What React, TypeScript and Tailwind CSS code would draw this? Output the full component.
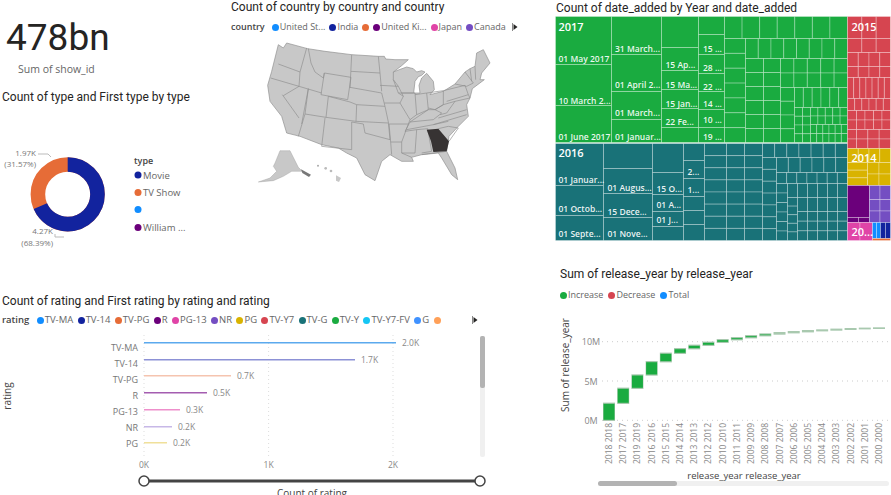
const sans = "font-['Roboto',sans-serif]";
const ui = "font-['Open_Sans',sans-serif]";

type LegendItem = { label: string; color: string };

const countryLegend: LegendItem[] = [
  { label: "United St...", color: "#118DFF" },
  { label: "India", color: "#12239E" },
  { label: "", color: "#E66C37" },
  { label: "United Ki...", color: "#6B007B" },
  { label: "Japan", color: "#E044A7" },
  { label: "Canada", color: "#744EC2" },
];

const ratingLegend: LegendItem[] = [
  { label: "TV-MA", color: "#118DFF" },
  { label: "TV-14", color: "#12239E" },
  { label: "TV-PG", color: "#E66C37" },
  { label: "R", color: "#6B007B" },
  { label: "PG-13", color: "#E044A7" },
  { label: "NR", color: "#744EC2" },
  { label: "PG", color: "#D9B300" },
  { label: "TV-Y7", color: "#D64550" },
  { label: "TV-G", color: "#197278" },
  { label: "TV-Y", color: "#1AAB40" },
  { label: "TV-Y7-FV", color: "#15C6F4" },
  { label: "G", color: "#4092FF" },
  { label: "", color: "#FFA058" },
];

const waterfallLegend: LegendItem[] = [
  { label: "Increase", color: "#1AAB40" },
  { label: "Decrease", color: "#D64550" },
  { label: "Total", color: "#118DFF" },
];

// [x, y, w, h, cols, rows], in page pixels
type Block = [number, number, number, number, number, number];

const greenBlocks: Block[] = [
  [556, 17, 56, 48, 1, 1],
  [556, 65, 56, 41, 1, 1],
  [556, 106, 56, 37, 1, 1],
  [612, 17, 50, 38, 1, 1],
  [612, 55, 50, 37, 1, 1],
  [612, 92, 50, 28, 1, 1],
  [612, 120, 50, 23, 1, 1],
  [662, 17, 37, 31, 1, 1],
  [662, 48, 37, 23, 1, 1],
  [662, 71, 37, 19, 1, 1],
  [662, 90, 37, 19, 1, 1],
  [662, 109, 37, 19, 1, 1],
  [662, 128, 37, 15, 1, 1],
  [699, 17, 26, 18, 1, 1],
  [699, 35, 26, 20, 1, 1],
  [699, 55, 26, 19, 1, 1],
  [699, 74, 26, 18, 1, 1],
  [699, 92, 26, 18, 1, 1],
  [699, 110, 26, 18, 1, 1],
  [699, 128, 26, 15, 1, 1],
  [725, 17, 123, 22, 7, 1],
  [725, 39, 21, 104, 1, 7],
  [746, 39, 102, 20, 8, 1],
  [746, 59, 18, 84, 1, 6],
  [764, 59, 17, 84, 1, 6],
  [781, 59, 67, 29, 5, 2],
  [781, 88, 14, 55, 1, 4],
  [795, 88, 53, 20, 6, 1],
  [795, 108, 16, 35, 2, 4],
  [811, 108, 37, 17, 5, 2],
  [811, 125, 37, 18, 6, 2],
];

const tealBlocks: Block[] = [
  [556, 144, 48, 42, 1, 1],
  [556, 186, 48, 30, 1, 1],
  [556, 216, 48, 25, 1, 1],
  [604, 144, 49, 25, 1, 1],
  [604, 169, 49, 25, 1, 1],
  [604, 194, 49, 24, 1, 1],
  [604, 218, 49, 23, 1, 1],
  [653, 144, 31, 29, 1, 1],
  [653, 173, 31, 22, 1, 1],
  [653, 195, 31, 17, 1, 1],
  [653, 212, 31, 15, 1, 1],
  [653, 227, 31, 14, 1, 1],
  [684, 144, 21, 17, 1, 1],
  [684, 161, 21, 18, 1, 1],
  [684, 179, 21, 18, 1, 1],
  [684, 197, 21, 14, 1, 1],
  [684, 211, 21, 14, 1, 1],
  [684, 225, 21, 16, 1, 1],
  [705, 144, 22, 97, 1, 8],
  [727, 144, 18, 97, 1, 8],
  [745, 144, 18, 97, 1, 8],
  [763, 144, 85, 14, 7, 1],
  [763, 158, 14, 83, 1, 7],
  [777, 158, 71, 15, 6, 1],
  [777, 173, 71, 11, 7, 1],
  [777, 184, 11, 57, 1, 6],
  [788, 184, 60, 14, 6, 1],
  [788, 198, 10, 43, 1, 5],
  [798, 198, 50, 14, 5, 1],
  [798, 212, 50, 29, 5, 3],
];

const otherBlocks: { fill: string; blocks: Block[] }[] = [
  {
    fill: "#D64550",
    blocks: [
      [848, 17, 43, 22, 3, 1],
      [848, 39, 43, 14, 3, 1],
      [848, 53, 43, 14, 4, 1],
      [848, 67, 43, 11, 4, 1],
      [848, 78, 43, 21, 7, 1],
      [848, 99, 43, 12, 6, 1],
      [848, 111, 9, 38, 1, 4],
      [857, 111, 34, 19, 4, 2],
      [857, 130, 34, 19, 3, 2],
    ],
  },
  {
    fill: "#D9B300",
    blocks: [
      [848, 149, 43, 14, 4, 1],
      [848, 163, 20, 23, 1, 3],
      [868, 163, 23, 23, 2, 2],
    ],
  },
  { fill: "#6B007B", blocks: [[848, 186, 22, 32, 1, 1], [848, 218, 22, 5, 2, 1]] },
  { fill: "#744EC2", blocks: [[870, 186, 21, 14, 2, 1], [870, 200, 21, 23, 2, 2]] },
  { fill: "#E044A7", blocks: [[848, 223, 25, 18, 2, 1]] },
  { fill: "#118DFF", blocks: [[873, 223, 8, 16, 2, 1]] },
  { fill: "#12239E", blocks: [[881, 223, 10, 16, 2, 1]] },
  { fill: "#E66C37", blocks: [[873, 239, 18, 2, 1, 1]] },
];

const treeLabels: [number, number, string][] = [
  [559, 62, "01 May 2017"],
  [559, 104, "10 March 2..."],
  [559, 140, "01 June 2017"],
  [615.5, 52, "31 March..."],
  [615.5, 88.5, "01 April 2..."],
  [615.5, 116.5, "01 March..."],
  [615.5, 140, "01 Januar..."],
  [666, 68.5, "15 Ap..."],
  [666, 88.5, "15 Ma..."],
  [666, 107.5, "15 Jan..."],
  [666, 125.5, "22 Fe..."],
  [703.5, 52.5, "15 ..."],
  [703.5, 71.5, "28 ..."],
  [703.5, 90.5, "22 ..."],
  [703.5, 107.5, "14 ..."],
  [703.5, 123.5, "10 ..."],
  [703.5, 140, "19 ..."],
  [559, 183.5, "01 Januar..."],
  [559, 212.5, "01 Octob..."],
  [559, 237.5, "01 Septe..."],
  [608, 191.5, "01 Augus..."],
  [608, 215.5, "15 Dece..."],
  [608, 237.5, "01 Nove..."],
  [657, 192.5, "15 O..."],
  [657, 208.5, "01 A..."],
  [657, 223.5, "01 J..."],
  [688, 175.5, "2..."],
  [688, 193.5, "1..."],
];

const treeHeads: [number, number, string][] = [
  [559, 31, "2017"],
  [559, 157, "2016"],
  [852, 31, "2015"],
  [852, 162, "2014"],
  [852, 236, "20..."],
];

const ratingBars = [
  { label: "TV-MA", end: 396, value: "2.0K", color: "#5BA9EE" },
  { label: "TV-14", end: 355, value: "1.7K", color: "#8C91D6" },
  { label: "TV-PG", end: 231, value: "0.7K", color: "#F5C4AF" },
  { label: "R", end: 207, value: "0.5K", color: "#A45DB0" },
  { label: "PG-13", end: 180, value: "0.3K", color: "#EE8FCB" },
  { label: "NR", end: 172, value: "0.2K", color: "#C7B8E7" },
  { label: "PG", end: 167, value: "0.2K", color: "#F0E09A" },
];

const years = [2018, 2017, 2019, 2016, 2015, 2014, 2013, 2012, 2010, 2011, 2009, 2008, 2007, 2006, 2005, 2004, 2003, 2002, 2001, 2000];
// top of each step, page pixels
const tops = [403.3, 388.3, 375, 361.7, 353.3, 348.7, 345.3, 342.3, 339.7, 337.7, 335.7, 334, 332.7, 331.7, 330.7, 330, 329.3, 328.7, 328.3, 328];

function Legend({ title, items, className }: { title?: string; items: LegendItem[]; className: string }) {
  return (
    <div className={`flex items-center ${className} ${ui} leading-3 whitespace-nowrap text-[#666666]`}>
      {title && <span className="mr-[3px] font-semibold text-[#444444]">{title}</span>}
      {items.map((item, i) => (
        <span key={i} className="flex items-center gap-px">
          <span className="h-[7px] w-[7px] rounded-full" style={{ backgroundColor: item.color }} />
          {item.label}
        </span>
      ))}
    </div>
  );
}

function Arrow() {
  return (
    <svg width="6" height="8" viewBox="0 0 6 8" className="shrink-0">
      <path d="M0.5 0v8" stroke="#888888" strokeWidth="1" />
      <path d="M1.5 1l4 3-4 3z" fill="#252423" />
    </svg>
  );
}

function Title({ children }: { children: string }) {
  return <h2 className={`${sans} text-[12px] leading-4 font-normal whitespace-nowrap text-[#252423]`}>{children}</h2>;
}

function Donut() {
  return (
    <svg width="228" height="120" viewBox="0 130 228 120" className={`${ui} text-[#777777]`}>
      <circle cx="67.7" cy="194.3" r="29.8" fill="none" stroke="#E66C37" strokeWidth="14.6" />
      <circle cx="67.7" cy="194.3" r="29.8" fill="none" stroke="#12239E" strokeWidth="14.6" strokeDasharray="128 60" transform="rotate(-90 67.7 194.3)" />
      <path d="M38 154h10l3 3M55 234v3h9" fill="none" stroke="#BBBBBB" strokeWidth="1" />
      <g fontSize="8" fill="#777777">
        <text x="36" y="156" textAnchor="end">1.97K</text>
        <text x="36" y="167" textAnchor="end">(31.57%)</text>
        <text x="53" y="234" textAnchor="end">4.27K</text>
        <text x="53" y="246" textAnchor="end">(68.39%)</text>
      </g>
      <text x="134" y="164" fontSize="9" fontWeight="600" fill="#444444">type</text>
      <circle cx="138" cy="175" r="3.5" fill="#12239E" />
      <text x="143" y="178.5" fontSize="9.5" fill="#666666">Movie</text>
      <circle cx="138" cy="192.5" r="3.5" fill="#E66C37" />
      <text x="143" y="196" fontSize="9.5" fill="#666666">TV Show</text>
      <circle cx="138" cy="209.5" r="3.5" fill="#118DFF" />
      <circle cx="138" cy="227.5" r="3.5" fill="#6B007B" />
      <text x="143" y="231" fontSize="9.5" fill="#666666">William ...</text>
    </svg>
  );
}

function UsMap() {
  const outline =
    "M160 140L175 150L185 135L248 152L300 160L380 170L460 175L478 175L482 183L510 185L550 185L530 203L505 222L520 216L545 207L565 212L575 222L590 218L600 222L590 232L580 236L570 250L566 285L585 285L582 262L590 240L605 226L625 250L628 275L615 290L655 280L690 258L720 222L735 212L750 205L755 165L775 155L795 195L770 225L765 245L778 245L742 272L735 300L725 320L730 355L700 385L672 415L665 460L690 510L698 545L680 530L650 480L640 465L590 470L560 478L565 490L530 490L495 470L470 490L450 548L420 530L395 480L365 465L340 450L290 440L225 415L185 405L170 355L135 310L128 262L140 220Z";
  const states =
    "M160 198L225 222M137 240L222 265M245 150L225 222L222 265M250 152L258 195L270 222L295 240L298 225L378 238M222 265L290 285M380 170L375 270M298 225L288 290L368 305L378 238M175 293L222 265M172 290L222 360M250 272L230 378M250 272L240 348L303 358L310 295M310 295L375 312L395 320L393 370L303 358M240 348L220 415M300 360L290 445L380 455L380 372M378 220L465 225M375 268L470 285L480 325L395 320M460 175L465 225L470 280M393 370L490 375M480 325L490 372L495 425L420 405L415 378L380 372M505 222L505 245L520 265L465 262M520 265L535 295L525 315L478 315M525 315L555 365L550 378L492 378M492 378L497 432L530 432L550 378M497 432L500 470M530 432L530 465L560 478M520 285L565 285M505 245L520 285L535 295M530 285L570 285L575 350L555 365M570 290L605 285L610 335L575 350M605 285L655 278L655 320L630 335L610 330M555 372L610 335L630 335L650 345L625 365L555 372M545 395L625 380L670 370M540 400L555 372M540 400L575 395L570 465L530 465M575 395L608 392L620 460L590 465M590 470L665 460M640 392L670 385L700 390L672 430M625 380L725 350M640 360L725 335M630 335L655 320L690 310L665 345L645 350M655 278L720 262L730 290L665 310M690 258L725 265L745 255M720 222L745 255M735 212L740 250M750 205L752 245M730 290L735 300M690 310L735 300";
  return (
    <svg width="270" height="165" viewBox="0 105 810 495">
      <path d={outline} fill="#C8C8C8" stroke="#8E8E8E" strokeWidth="2" strokeLinejoin="round" />
      <path d={states} fill="none" stroke="#8E8E8E" strokeWidth="2" strokeLinejoin="round" />
      <path d="M605 395L640 392L672 430L665 460L625 462L618 430Z" fill="#373333" />
      <path d="M150 495L165 458L195 458L220 508L232 520L200 520L175 535L145 548L100 552L135 540L155 520L145 505Z" fill="#C8C8C8" stroke="#8E8E8E" strokeWidth="1" />
      <path d="M228 514L258 530L252 537L232 525Z" fill="#777777" />
      <circle cx="279" cy="503" r="3" fill="#AAAAAA" />
      <circle cx="302" cy="511" r="4" fill="#BBBBBB" />
      <circle cx="318" cy="519" r="4" fill="#BBBBBB" />
      <path d="M333 532L348 540L342 552L333 548Z" fill="#C8C8C8" />
    </svg>
  );
}

function TreeBlocks({ blocks, fill }: { blocks: Block[]; fill: string }) {
  return (
    <>
      {blocks.flatMap(([x, y, w, h, cols, rows], b) =>
        Array.from({ length: cols * rows }, (_, i) => (
          <rect
            key={`${b}-${i}`}
            x={x + ((i % cols) * w) / cols}
            y={y + (Math.floor(i / cols) * h) / rows}
            width={w / cols}
            height={h / rows}
            fill={fill}
            stroke="#FFFFFF"
            strokeOpacity="0.28"
            strokeWidth="1"
          />
        )),
      )}
    </>
  );
}

function Treemap() {
  return (
    <svg width="336" height="225" viewBox="555.5 16.5 336 225" className={ui}>
      <TreeBlocks blocks={greenBlocks} fill="#1AAB40" />
      <TreeBlocks blocks={tealBlocks} fill="#197278" />
      {otherBlocks.map((o) => (
        <TreeBlocks key={o.fill} blocks={o.blocks} fill={o.fill} />
      ))}
      {treeLabels.map(([x, y, t]) => (
        <text key={`${x}-${y}`} x={x} y={y} fontSize="8.5" fontWeight="600" fill="#FFFFFF" fillOpacity="0.92">{t}</text>
      ))}
      {treeHeads.map(([x, y, t]) => (
        <text key={t} x={x} y={y} fontSize="11" fontWeight="600" fill="#FFFFFF">{t}</text>
      ))}
    </svg>
  );
}

function RatingChart() {
  return (
    <svg width="490" height="163" viewBox="0 332 490 163" className={ui}>
      <text transform="translate(11 396) rotate(-90)" textAnchor="middle" fontSize="10" fill="#444444">rating</text>
      {[144, 268.6, 393].map((x) => (
        <path key={x} d={`M${x} 335V457`} stroke="#DDDDDD" strokeWidth="1" strokeDasharray="1 3" />
      ))}
      {ratingBars.map((b, i) => {
        const y = Math.round(342 + i * 16.7);
        return (
          <g key={b.label}>
            <text x="138" y={351 + i * 16} textAnchor="end" fontSize="9" fill="#777777">{b.label}</text>
            <rect x="144" y={y} width={b.end - 144} height="1.5" fill={b.color} />
            <text x={b.end + 6} y={y + 3.5} fontSize="8.5" fill="#888888">{b.value}</text>
          </g>
        );
      })}
      <text x="144" y="468" textAnchor="middle" fontSize="8.5" fill="#888888">0K</text>
      <text x="268.6" y="468" textAnchor="middle" fontSize="8.5" fill="#888888">1K</text>
      <text x="393" y="468" textAnchor="middle" fontSize="8.5" fill="#888888">2K</text>
      <rect x="480" y="336" width="5" height="121" rx="2" fill="#F0F0F0" />
      <rect x="480" y="336" width="5" height="52" rx="2" fill="#B3B3B3" />
      <rect x="144" y="479.5" width="336" height="3" fill="#444444" />
      <circle cx="144" cy="481" r="5" fill="#FFFFFF" stroke="#444444" strokeWidth="1.5" />
      <circle cx="480" cy="481" r="5" fill="#FFFFFF" stroke="#444444" strokeWidth="1.5" />
      <text x="312" y="497" textAnchor="middle" fontSize="10" fill="#444444">Count of rating</text>
    </svg>
  );
}

function Waterfall() {
  return (
    <svg width="336" height="188" viewBox="555 307 336 188" className={ui}>
      <text transform="translate(569 365) rotate(-90)" textAnchor="middle" fontSize="10" fill="#444444">Sum of release_year</text>
      {[
        [341.7, "10M"],
        [381, "5M"],
        [420.3, "0M"],
      ].map(([y, t]) => (
        <g key={t}>
          <path d={`M602 ${y}H890`} stroke="#CCCCCC" strokeWidth="1" strokeDasharray="1 4" />
          <text x="591" y={Number(y) + 3.5} textAnchor="middle" fontSize="9" fill="#888888">{t}</text>
        </g>
      ))}
      {years.map((year, i) => {
        const x = 609 + i * 14.21;
        const bottom = i === 0 ? 420.3 : tops[i - 1];
        return (
          <g key={year}>
            <rect x={x - 6} y={tops[i] - 0.7} width="12" height={bottom - tops[i] + 1.4} fill="#A9C9AF" />
            {bottom - tops[i] > 1.5 && <rect x={x - 5.5} y={tops[i] + 0.5} width="11" height={bottom - tops[i] - 1} fill="#1AAB40" />}
            <text transform={`translate(${x + 3} 464) rotate(-90)`} fontSize="8.5" fill="#888888">{`${year} ${year}`}</text>
          </g>
        );
      })}
      <text x="744" y="479" textAnchor="middle" fontSize="9.5" fill="#444444">release_year release_year</text>
      <rect x="598" y="481" width="291" height="5" rx="2.5" fill="#F0F0F0" />
      <rect x="598" y="481" width="79" height="5" rx="2.5" fill="#B3B3B3" />
    </svg>
  );
}

export default function App() {
  return (
    <div className="flex h-[495px] w-[891px] overflow-hidden bg-white">
      <div className="flex w-[555px] shrink-0 flex-col">
        <div className="flex h-[293px]">
          <section className="w-[231px] shrink-0">
            <div className={`${sans} mt-[15px] ml-[6px] text-[37px] leading-[46px] text-[#252423]`}>478bn</div>
            <div className={`${ui} ml-[18px] text-[10.5px] leading-4 text-[#666666]`}>Sum of show_id</div>
            <div className="mt-[12px] ml-[2px]">
              <Title>Count of type and First type by type</Title>
            </div>
            <div className="mt-[25px]">
              <Donut />
            </div>
          </section>
          <section className="min-w-0 flex-1">
            <div className="mt-[-1px]">
              <Title>Count of country by country and country</Title>
            </div>
            <div className="mt-[6px] flex items-center justify-between pr-[37px]">
              <Legend title="country" items={countryLegend} className="gap-[4px] text-[9px]" />
              <Arrow />
            </div>
            <div className="-ml-[6px]">
              <UsMap />
            </div>
          </section>
        </div>
        <section>
          <div className="ml-[2px]">
            <Title>Count of rating and First rating by rating and rating</Title>
          </div>
          <div className="mt-[5px] flex w-[478px] items-center justify-between pl-[2px]">
            <Legend title="rating" items={ratingLegend} className="gap-[4.4px] text-[9.5px]" />
            <Arrow />
          </div>
          <div className="mt-[6px]">
            <RatingChart />
          </div>
        </section>
      </div>
      <div className="flex w-[336px] flex-col">
        <div className="pl-[1px]">
          <Title>Count of date_added by Year and date_added</Title>
        </div>
        <Treemap />
        <div className="mt-[25px] ml-[5px]">
          <Title>Sum of release_year by release_year</Title>
        </div>
        <div className="mt-[7px] ml-[5px]">
          <Legend items={waterfallLegend} className="gap-[5px] text-[9px]" />
        </div>
        <div className="mt-[6px]">
          <Waterfall />
        </div>
      </div>
    </div>
  );
}
